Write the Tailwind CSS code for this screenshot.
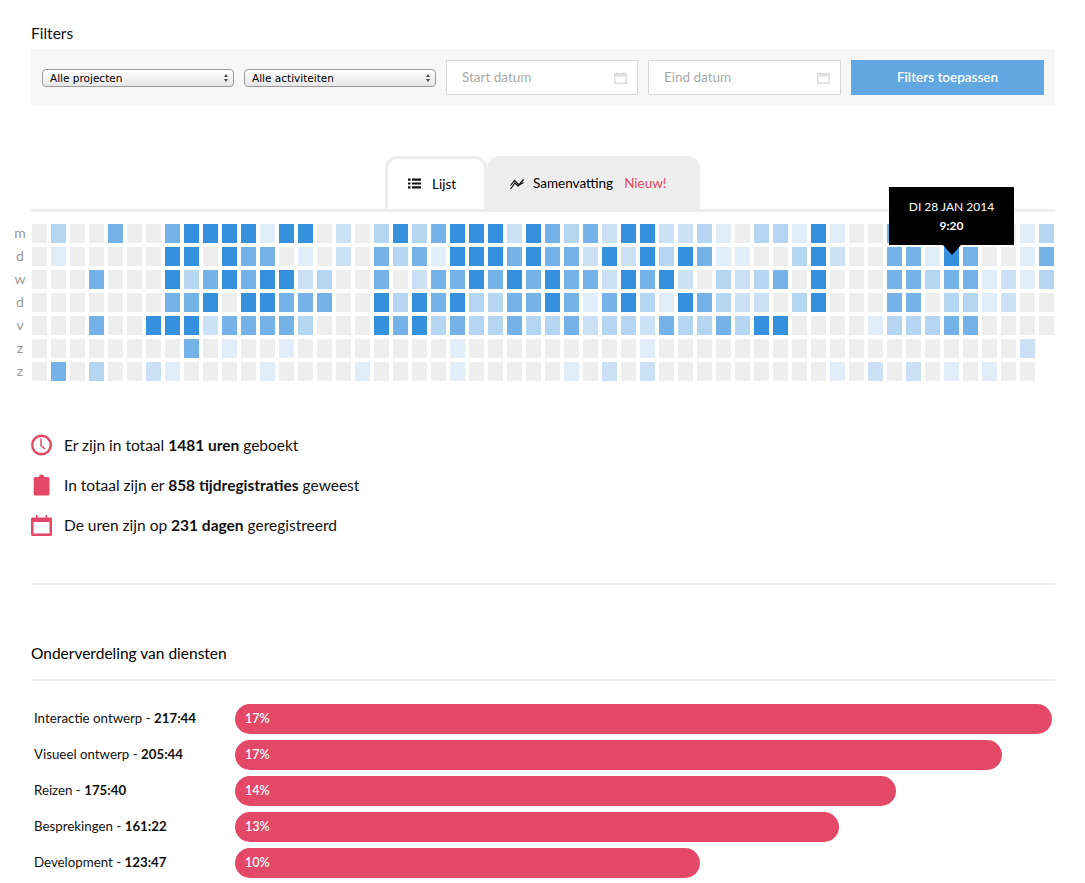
<!DOCTYPE html>
<html lang="nl">
<head>
  <meta charset="UTF-8" />
  <meta name="viewport" content="width=device-width, initial-scale=1.0" />
  <script src="https://cdn.jsdelivr.net/npm/@tailwindcss/browser@4"></script>
  <title>Rapportage</title>
</head>
<body class="bg-white text-[#111] font-['Lato','Open_Sans',sans-serif] text-[15.5px] overflow-hidden">
  <div class="pl-[31px] pr-[30px] pt-[23px]">
    <h2 class="text-[15.5px] leading-[20px] mb-[6px]">Filters</h2>
    <div class="bg-[#f7f7f7] h-[57px] px-[11px] flex items-center gap-[10px]">
      <div class="relative w-[192px] shrink-0 mt-[1px]">
        <select class="block appearance-none w-full h-[18px] rounded-[4px] border border-[#9a9a9a] bg-gradient-to-b from-white to-[#e6e6e6] pl-[7px] text-[10.5px] leading-[16px] text-black font-['DejaVu_Sans',sans-serif]">
          <option>Alle projecten</option>
        </select>
        <svg class="absolute right-[5px] top-[4px] pointer-events-none" width="6" height="10" viewBox="0 0 6 10"><path d="M3 1 L5 4 H1 Z M3 9 L5 6 H1 Z" fill="#444"/></svg>
      </div>
      <div class="relative w-[192px] shrink-0 mt-[1px]">
        <select class="block appearance-none w-full h-[18px] rounded-[4px] border border-[#9a9a9a] bg-gradient-to-b from-white to-[#e6e6e6] pl-[7px] text-[10.5px] leading-[16px] text-black font-['DejaVu_Sans',sans-serif]">
          <option>Alle activiteiten</option>
        </select>
        <svg class="absolute right-[5px] top-[4px] pointer-events-none" width="6" height="10" viewBox="0 0 6 10"><path d="M3 1 L5 4 H1 Z M3 9 L5 6 H1 Z" fill="#444"/></svg>
      </div>
      <div class="w-[192px] shrink-0 h-[35px] bg-white border border-[#d8d8d8] flex items-center pl-[15px] pr-[10px]">
        <input placeholder="Start datum" class="w-full min-w-0 text-[13.5px] outline-none placeholder:text-[#aaa]" />
        <svg class="shrink-0" width="13" height="13" viewBox="0 0 13 13"><path d="M0 2h13v11H0z" fill="#ddd"/><path d="M1.500 5.500h10v6h-10z" fill="#fff"/><path d="M2.500 0.500h1v2h-1zM9.500 0.500h1v2h-1z" fill="#ddd"/></svg>
      </div>
      <div class="w-[193px] shrink-0 h-[35px] bg-white border border-[#d8d8d8] flex items-center pl-[15px] pr-[10px]">
        <input placeholder="Eind datum" class="w-full min-w-0 text-[13.5px] outline-none placeholder:text-[#aaa]" />
        <svg class="shrink-0" width="13" height="13" viewBox="0 0 13 13"><path d="M0 2h13v11H0z" fill="#ddd"/><path d="M1.500 5.500h10v6h-10z" fill="#fff"/><path d="M2.500 0.500h1v2h-1zM9.500 0.500h1v2h-1z" fill="#ddd"/></svg>
      </div>
      <button class="w-[193px] shrink-0 h-[35px] bg-[#61a7e2] text-white text-[13.5px] font-semibold">Filters toepassen</button>
    </div>

    <!-- tabs -->
    <div class="mt-[50px] flex pl-[354px]">
      <div class="w-[102px] h-[53px] bg-white border-[3px] border-b-0 border-[#eee] rounded-t-[12px] flex items-center pl-[20px] gap-[11px] text-[13.5px] text-black">
        <svg class="-mt-[1px]" width="13" height="11" viewBox="0 0 13 11" fill="#111"><path d="M0 0.500h2.500v2.200H0zM0 4.400h2.500v2.200H0zM0 8.300h2.500v2.200H0zM4 0.500h9v2.200H4zM4 4.400h9v2.200H4zM4 8.300h9v2.200H4z"/></svg>
        <span>Lijst</span>
      </div>
      <div class="w-[213px] h-[53px] pt-[2px] bg-[#eee] rounded-t-[12px] flex items-center pl-[23px] text-[13.5px] text-black">
        <svg class="mr-[9px]" width="14" height="12" viewBox="0 0 14 12" fill="none" stroke="#111" stroke-width="1.200"><path d="M0.500 11 L5 5 L8 8 L13.500 1.500"/><path d="M0.500 7.500 L4.500 2.500 L9 7 L13.500 4.500"/></svg>
        <span>Samenvatting</span>
        <span class="ml-[11px] text-[#e34866]">Nieuw!</span>
      </div>
    </div>
    <div class="h-[3px] bg-[#eee]"></div>

    <!-- heatmap -->
    <div class="relative -ml-[31px] mt-[12px] flex">
      <div class="w-[32px] pl-[8px] grid grid-rows-[repeat(7,19px)] gap-y-[4px] text-center text-[14px] leading-[17px] text-[#999]">
        <span>m</span><span>d</span><span>w</span><span>d</span><span>v</span><span>z</span><span>z</span>
      </div>
      <div id="heatmap" class="grid grid-flow-col grid-cols-[repeat(54,15px)] grid-rows-[repeat(7,19px)] gap-x-[4px] gap-y-[4px]"></div>
      <div class="absolute left-[889px] top-[-37px] w-[125px] h-[58px] bg-black text-white text-center text-[12px] flex flex-col justify-center gap-[3px]">
        <span class="leading-[16px]">DI 28 JAN 2014</span>
        <span class="leading-[16px] font-bold">9:20</span>
        <span class="absolute left-[54px] top-[58px] border-x-[9px] border-x-transparent border-t-[10px] border-t-black"></span>
      </div>
    </div>

    <!-- stats -->
    <div class="mt-[44px]">
      <div class="h-[40px] flex items-center">
        <svg class="w-[21px] mr-[12px]" width="21" height="22" viewBox="0 0 21 22" fill="none" stroke="#e34866"><circle cx="10.500" cy="11" r="9.300" stroke-width="2.400"/><path d="M10 4.500 V11.500 L14 15" stroke-width="1.500"/></svg>
        <p class="pt-[2px]">Er zijn in totaal <b>1481 uren</b> geboekt</p>
      </div>
      <div class="h-[40px] flex items-center">
        <svg class="w-[21px] mr-[12px]" width="21" height="22" viewBox="0 0 21 22" fill="#e34866"><path d="M4.200 3H8c0-1.500 1-2.500 2.600-2.500S13.200 1.500 13.200 3H17c.8 0 1.500.7 1.500 1.500v15.500c0 .8-.7 1.500-1.500 1.500H4.200c-.8 0-1.500-.7-1.500-1.500V4.500C2.700 3.700 3.400 3 4.200 3z"/></svg>
        <p class="pt-[2px]">In totaal zijn er <b>858 tijdregistraties</b> geweest</p>
      </div>
      <div class="h-[40px] flex items-center">
        <svg class="w-[21px] mr-[12px]" width="21" height="22" viewBox="0 0 21 22" fill="#e34866"><path d="M1.500 3.500h18c.8 0 1.500.7 1.500 1.500v15.500c0 .8-.7 1.500-1.500 1.500h-18c-.8 0-1.500-.7-1.500-1.500V5c0-.8.7-1.500 1.500-1.500z"/><path d="M2.500 8h16v11.500h-16z" fill="#fff"/><path d="M5 1h1.500v4H5zM14.500 1H16v4h-1.500z"/></svg>
        <p class="pt-[2px]">De uren zijn op <b>231 dagen</b> geregistreerd</p>
      </div>
    </div>
    <div class="mt-[38px] h-[2px] bg-[#eee]"></div>

    <!-- diensten -->
    <h2 class="mt-[58px] mb-[16px] text-[15.5px] leading-[20px] text-black">Onderverdeling van diensten</h2>
    <div class="h-[2px] bg-[#eee]"></div>
    <div class="mt-[23px] flex flex-col gap-[6px] text-[13.3px]">
      <div class="flex items-center h-[30px]"><span class="w-[204px] pl-[3px] shrink-0">Interactie ontwerp - <b>217:44</b></span><div class="w-[817px] h-full bg-[#e34866] rounded-full pl-[10px] flex items-center text-white text-[12.5px] font-semibold">17%</div></div>
      <div class="flex items-center h-[30px]"><span class="w-[204px] pl-[3px] shrink-0">Visueel ontwerp - <b>205:44</b></span><div class="w-[767px] h-full bg-[#e34866] rounded-full pl-[10px] flex items-center text-white text-[12.5px] font-semibold">17%</div></div>
      <div class="flex items-center h-[30px]"><span class="w-[204px] pl-[3px] shrink-0">Reizen - <b>175:40</b></span><div class="w-[661px] h-full bg-[#e34866] rounded-full pl-[10px] flex items-center text-white text-[12.5px] font-semibold">14%</div></div>
      <div class="flex items-center h-[30px]"><span class="w-[204px] pl-[3px] shrink-0">Besprekingen - <b>161:22</b></span><div class="w-[604px] h-full bg-[#e34866] rounded-full pl-[10px] flex items-center text-white text-[12.5px] font-semibold">13%</div></div>
      <div class="flex items-center h-[30px]"><span class="w-[204px] pl-[3px] shrink-0">Development - <b>123:47</b></span><div class="w-[465px] h-full bg-[#e34866] rounded-full pl-[10px] flex items-center text-white text-[12.5px] font-semibold">10%</div></div>
    </div>
  </div>

  <script>
    const niveaus = ['bg-[#eeeeee]', 'bg-[#e1eefa]', 'bg-[#cce1f6]', 'bg-[#b5d6f3]', 'bg-[#74b2e7]', 'bg-[#3590dd]'];
    // een regel per weekdag, een cijfer per week
    const rijen = [
      '030040045555155020' + '3534555254342552231' + '03315100444444013',
      '010000055054401020' + '4341555454425253541' + '10035200441540014',
      '000400053454552300' + '4024454545442545203' + '23405000443441213',
      '000000044505544400' + '5354533445414531543' + '22035000440331200',
      '000400555244443000' + '5453433433423324334' + '35500001333440000',
      '000000004010010000' + '0000100000000010000' + '0000000000000002',
      '040300210000100001' + '0000100000102020000' + '0000010202010100'
    ];
    const grid = document.getElementById('heatmap');
    for (let week = 0; week < 54; week++) {
      rijen.forEach((rij) => {
        const cel = document.createElement('div');
        if (rij[week] !== undefined) cel.className = niveaus[Number(rij[week])];
        grid.appendChild(cel);
      });
    }
  </script>
</body>
</html>
